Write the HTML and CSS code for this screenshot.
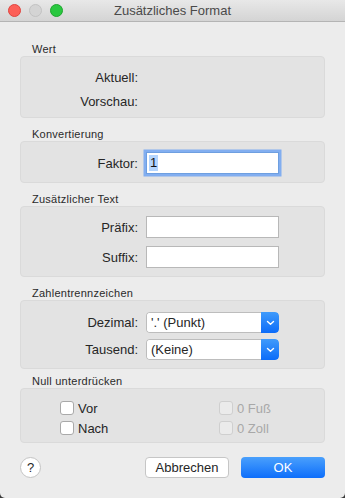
FILE: index.html
```html
<!DOCTYPE html>
<html lang="de">
<head>
    <meta charset="UTF-8">
    <title>Zusätzliches Format</title>
    <link rel="stylesheet" href="styles.css">
</head>
<body>
    <div class="window">
        <div class="titlebar">
            <div class="lights">
                <span class="light red"></span>
                <span class="light gray"></span>
                <span class="light green"></span>
            </div>
            <div class="title">Zusätzliches Format</div>
        </div>

        <div class="content">
            <div class="group-label">Wert</div>
            <div class="group group-wert">
                <div class="row"><label>Aktuell:</label><span></span></div>
                <div class="row"><label>Vorschau:</label><span></span></div>
            </div>

            <div class="group-label">Konvertierung</div>
            <div class="group group-konv">
                <div class="row">
                    <label>Faktor:</label>
                    <div class="field focused"><span class="sel">1</span></div>
                </div>
            </div>

            <div class="group-label">Zusätzlicher Text</div>
            <div class="group group-text">
                <div class="row"><label>Präfix:</label><div class="field"></div></div>
                <div class="row"><label>Suffix:</label><div class="field"></div></div>
            </div>

            <div class="group-label">Zahlentrennzeichen</div>
            <div class="group group-sep">
                <div class="row">
                    <label>Dezimal:</label>
                    <div class="popup">
                        <span class="popup-text">'.' (Punkt)</span>
                        <span class="popup-arrow">
                            <svg width="9" height="6" viewBox="0 0 9 6"><path d="M1.5 1.5 L4.5 4.3 L7.5 1.5" fill="none" stroke="#fff" stroke-width="1.4" stroke-linecap="round" stroke-linejoin="round"/></svg>
                        </span>
                    </div>
                </div>
                <div class="row">
                    <label>Tausend:</label>
                    <div class="popup">
                        <span class="popup-text">(Keine)</span>
                        <span class="popup-arrow">
                            <svg width="9" height="6" viewBox="0 0 9 6"><path d="M1.5 1.5 L4.5 4.3 L7.5 1.5" fill="none" stroke="#fff" stroke-width="1.4" stroke-linecap="round" stroke-linejoin="round"/></svg>
                        </span>
                    </div>
                </div>
            </div>

            <div class="group-label last">Null unterdrücken</div>
            <div class="group group-null">
                <div class="check"><span class="box"></span>Vor</div>
                <div class="check disabled"><span class="box"></span>0 Fuß</div>
                <div class="check"><span class="box"></span>Nach</div>
                <div class="check disabled"><span class="box"></span>0 Zoll</div>
            </div>

            <div class="buttons">
                <div class="help">?</div>
                <div class="spacer"></div>
                <div class="btn">Abbrechen</div>
                <div class="btn primary">OK</div>
            </div>
        </div>
    </div>
</body>
</html>
```

FILE: styles.css
```css
html {
    background: #3a3a3a;
}
body {
    margin: 0;
    font-family: "Liberation Sans", Arial, sans-serif;
    color: #262626;
}
.window {
    width: 345px;
    height: 498px;
    background: #ececec;
    border-radius: 0 0 5px 5px;
    overflow: hidden;
}
.titlebar {
    height: 21px;
    border-bottom: 1px solid #b4b4b4;
    background: linear-gradient(#e8e8e8, #d4d4d4);
    display: flex;
    align-items: center;
    position: relative;
}
.lights {
    display: flex;
    gap: 8px;
    padding-left: 8px;
}
.light {
    width: 11px;
    height: 11px;
    border-radius: 50%;
    border: 0.5px solid;
}
.red {
    background: #fc5f57;
    border-color: #e0443e;
}
.gray {
    background: #d4d4d4;
    border-color: #c2c2c2;
}
.green {
    background: #2ac840;
    border-color: #1fa62f;
}
.title {
    position: absolute;
    left: 0;
    right: 0;
    text-align: center;
    font-size: 13px;
    color: #4a4a4a;
    line-height: 21px;
}
.content {
    padding: 21px 20px 0 20px;
}
.group-label {
    font-size: 11px;
    letter-spacing: 0.25px;
    line-height: 13px;
    height: 13px;
    padding-left: 12px;
    margin-top: 10px;
    color: #2a2a2a;
}
.group-label:first-child {
    margin-top: 0;
}
.group-label.last {
    margin-top: 6px;
}
.group {
    background: #e3e3e3;
    border: 1px solid #dadada;
    border-radius: 4px;
}
.row {
    display: grid;
    grid-template-columns: 117px 133px;
    column-gap: 8px;
    align-items: center;
    font-size: 13px;
}
.row label {
    text-align: right;
}
.group-wert {
    padding: 8px 0 4px;
}
.group-wert .row {
    height: 24px;
}
.group-konv {
    padding: 10px 0 8px;
}
.group-text {
    padding: 9px 0 8px;
    display: flex;
    flex-direction: column;
    gap: 8px;
}
.group-sep {
    padding: 11px 0 8px;
    display: flex;
    flex-direction: column;
    gap: 6px;
}
.field {
    height: 20px;
    background: #fff;
    border: 1px solid #b8b8b8;
    box-sizing: content-box;
    width: 131px;
    display: flex;
    align-items: center;
    padding-left: 0;
}
.field.focused {
    border-color: #6e9fe0;
    box-shadow: 0 0 0 2.5px #82aef0;
    height: 20px;
}
.sel {
    background: #b4d5fe;
    margin-left: 2px;
    padding: 0 1px;
    line-height: 16px;
    font-size: 13px;
    color: #111;
}
.popup {
    height: 21px;
    display: flex;
    border-radius: 4px;
    overflow: hidden;
}
.popup-text {
    flex: 1;
    background: #fff;
    border: 1px solid #bdbdbd;
    border-right: none;
    border-radius: 3px 0 0 3px;
    line-height: 19px;
    padding-left: 4px;
    font-size: 13px;
}
.popup-arrow {
    width: 18px;
    background: linear-gradient(#409bfb, #0b6cf9);
    border-radius: 0 4px 4px 0;
    display: flex;
    align-items: center;
    justify-content: center;
}
.group-null {
    padding: 9px 0 4px 39px;
    display: grid;
    grid-template-columns: 159px 1fr;
}
.check {
    height: 20px;
    display: flex;
    align-items: center;
    font-size: 13px;
}
.check .box {
    width: 12px;
    height: 12px;
    border: 1px solid #a9a9a9;
    border-radius: 3px;
    background: #fff;
    margin-right: 4px;
}
.check.disabled {
    color: #a8a8a8;
}
.check.disabled .box {
    background: #ebebeb;
    border-color: #cfcfcf;
}
.buttons {
    display: flex;
    align-items: center;
    gap: 12px;
    margin-top: 14px;
}
.help {
    width: 19px;
    height: 19px;
    border: 1px solid #c4c4c4;
    border-radius: 50%;
    background: #fff;
    display: flex;
    align-items: center;
    justify-content: center;
    font-size: 13px;
}
.spacer {
    flex: 1;
}
.btn {
    width: 82px;
    height: 19px;
    border: 1px solid #c6c6c6;
    border-radius: 4px;
    background: #fff;
    text-align: center;
    line-height: 19px;
    font-size: 13px;
}
.btn.primary {
    border-color: #2a7ff5;
    background: linear-gradient(#4aa0fc, #0d6efb);
    color: #fff;
    width: 84px;
    border: none;
    height: 21px;
    line-height: 21px;
}
```
